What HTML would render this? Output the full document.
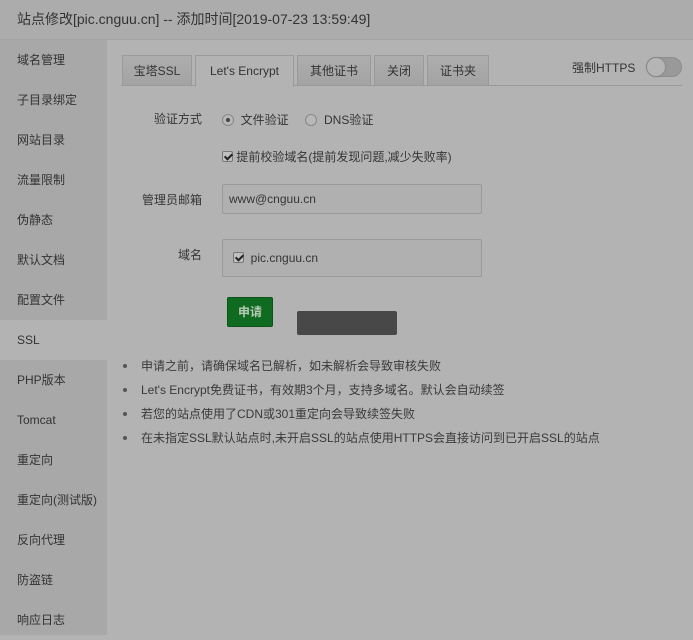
<!DOCTYPE html>
<html><head><meta charset="utf-8"><style>
*{margin:0;padding:0;box-sizing:border-box}
body{width:693px;height:635px;overflow:hidden;background:#b3b3b3;font-family:"Liberation Sans","Noto Sans CJK SC",sans-serif;font-size:12px;color:#353535;position:relative}
.hd{position:absolute;left:0;top:0;width:693px;height:40px;background:#acacac;border-bottom:1px solid #a2a2a2;font-size:14px;line-height:38px;padding-left:17px;color:#333}
.sb{position:absolute;left:0;top:40px;width:107px;height:595px;background:#a8a8a8}
.sb div{height:40px;line-height:40px;padding-left:17px;font-size:12px;color:#333}
.sb .on{background:#b3b3b3}
.tabs{position:absolute;left:121px;top:55px;height:31px;width:561px;border-bottom:1px solid #999}
.tab{position:absolute;top:0;height:31px;border:1px solid #9a9a9a;background:linear-gradient(#aeaeae,#a3a3a3);text-align:center;line-height:31px;font-size:12px;color:#333}
.tab.on{background:#b3b3b3;border-bottom-color:#b3b3b3;height:32px}
.abs{position:absolute}
.lbl{position:absolute;text-align:right;width:80px;left:122px}
.inp{position:absolute;left:222px;width:260px;border:1px solid #9a9a9a;border-radius:2px;background:#b0b0b0;padding-left:6px}
.cb{display:inline-block;width:11px;height:11px;border:1px solid #777;background:#c0c0c0;vertical-align:-1px;position:relative;border-radius:2px}
.cb:after{content:"";position:absolute;left:3px;top:0px;width:3px;height:6px;border:solid #222;border-width:0 2px 2px 0;transform:rotate(45deg)}
.rd{display:inline-block;width:12px;height:12px;border:1px solid #888;border-radius:50%;background:#b8b8b8;vertical-align:-2px;position:relative}
.rd.on:after{content:"";position:absolute;left:3px;top:3px;width:4px;height:4px;border-radius:50%;background:#444}
ul{position:absolute;left:121px;top:354px;list-style:none}
li{height:24px;line-height:24px;color:#3a3a3a}
li:before{content:"";display:inline-block;width:4px;height:4px;border-radius:50%;background:#555;margin:0 14px 2px 2px;vertical-align:middle}
</style></head><body>
<div class="hd">站点修改[pic.cnguu.cn] -- 添加时间[2019-07-23 13:59:49]</div>
<div class="sb">
<div>域名管理</div><div>子目录绑定</div><div>网站目录</div><div>流量限制</div><div>伪静态</div><div>默认文档</div><div>配置文件</div><div class="on">SSL</div><div>PHP版本</div><div>Tomcat</div><div>重定向</div><div>重定向(测试版)</div><div>反向代理</div><div>防盗链</div><div>响应日志</div>
</div>
<div class="tabs">
<div class="tab" style="left:1px;width:70px">宝塔SSL</div>
<div class="tab on" style="left:74px;width:99px">Let's Encrypt</div>
<div class="tab" style="left:176px;width:74px">其他证书</div>
<div class="tab" style="left:253px;width:50px">关闭</div>
<div class="tab" style="left:306px;width:62px">证书夹</div>
</div>
<div class="abs" style="left:572px;top:60px;line-height:16px">强制HTTPS</div>
<div class="abs" style="left:646px;top:57px;width:36px;height:20px;border-radius:10px;background:#999;border:1px solid #8e8e8e"><div style="width:18px;height:18px;border-radius:50%;background:#b5b5b5;box-shadow:0 0 2px #777"></div></div>
<div class="lbl" style="top:111px;line-height:16px">验证方式</div>
<div class="abs" style="left:222px;top:112px;line-height:16px"><span class="rd on"></span>&nbsp; 文件验证 &nbsp; &nbsp; <span class="rd"></span>&nbsp; DNS验证</div>
<div class="abs" style="left:222px;top:149px;line-height:16px"><span class="cb"></span>&nbsp;提前校验域名(提前发现问题,减少失败率)</div>
<div class="lbl" style="top:192px;line-height:16px">管理员邮箱</div>
<div class="inp" style="top:184px;height:30px;line-height:28px;font-size:12px">www@cnguu.cn</div>
<div class="lbl" style="top:247px;line-height:16px">域名</div>
<div class="inp" style="top:239px;height:38px;line-height:36px;padding-left:10px"><span class="cb"></span>&nbsp; pic.cnguu.cn</div>
<div class="abs" style="left:227px;top:297px;width:46px;height:30px;background:#0f6b1f;border:1px solid #0a5517;border-radius:2px;color:#b9c9b9;text-align:center;line-height:28px;font-weight:bold">申请</div>
<div class="abs" style="left:297px;top:311px;width:100px;height:24px;background:#484848;border-radius:2px"></div>
<ul>
<li>申请之前，请确保域名已解析，如未解析会导致审核失败</li>
<li>Let's Encrypt免费证书，有效期3个月，支持多域名。默认会自动续签</li>
<li>若您的站点使用了CDN或301重定向会导致续签失败</li>
<li>在未指定SSL默认站点时,未开启SSL的站点使用HTTPS会直接访问到已开启SSL的站点</li>
</ul>
</body></html>
